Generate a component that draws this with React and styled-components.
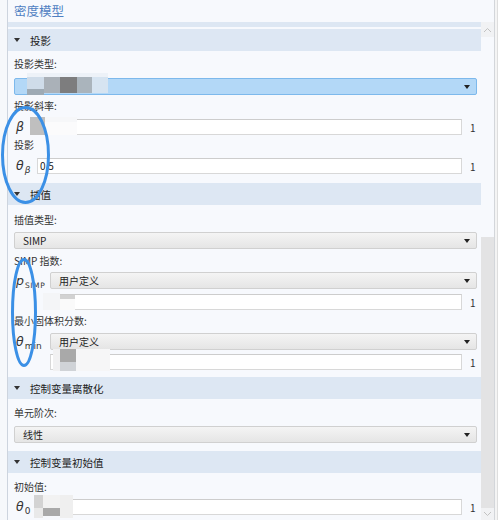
import React from 'react';
import styled, { createGlobalStyle } from 'styled-components';

const GlobalStyle = createGlobalStyle`
  html, body {
    margin: 0;
    padding: 0;
    background: #fff;
  }
  body {
    font-family: "Noto Sans CJK SC", "Noto Sans", sans-serif;
    color: #333;
  }
`;

const Window = styled.div`
  position: relative;
  display: flex;
  width: 502px;
  height: 520px;
  overflow: hidden;
  background: #fff;
`;

const Gutter = styled.div`
  width: 7px;
  flex: none;
  background: #f6f8fb;
`;

const Panel = styled.div`
  width: 486px;
  flex: none;
  display: flex;
  flex-direction: column;
  border-left: 1px solid #cdd4de;
  border-right: 1px solid #d3d6da;
  background: #f7f9fd;
`;

const Rail = styled.div`
  width: 2px;
  flex: none;
  border-right: 1px solid #dedede;
  background: #f4f4f4;
`;

const Title = styled.div`
  height: 22px;
  line-height: 22px;
  padding-left: 6px;
  font-size: 12.5px;
  color: #4f7fc2;
`;

const Body = styled.div`
  flex: 1;
  min-height: 0;
  display: flex;
`;

const Content = styled.div`
  width: 473px;
  flex: none;
  overflow: hidden;
`;

const Strip = styled.div`
  height: 5px;
  margin-bottom: 2px;
  background: #dde7f3;
`;

const Header = styled.div`
  height: 22px;
  display: flex;
  align-items: center;
  gap: 10px;
  padding-left: 6px;
  background: #dde7f3;
  font-size: 10.5px;
  color: #222;
`;

const Caret = styled.span`
  width: 0;
  height: 0;
  border-left: 3px solid transparent;
  border-right: 3px solid transparent;
  border-top: 4px solid ${p => p.$color || '#333'};
`;

const Section = styled.div`
  padding: ${p => p.$top}px 4px ${p => p.$bottom}px 6px;
`;

const Label = styled.div`
  height: 20px;
  line-height: 20px;
  font-size: 10px;
  color: #333;
  margin-bottom: ${p => p.$mb ?? 2}px;
`;

const Select = styled.div`
  height: 17px;
  box-sizing: border-box;
  display: flex;
  align-items: center;
  justify-content: space-between;
  padding: 0 6px 0 ${p => (p.$indent ? 9 : 8)}px;
  border: 1px solid ${p => (p.$active ? '#7db9ec' : '#d0d0d0')};
  border-radius: 2px;
  background: ${p =>
    p.$active ? '#b3d8f7' : 'linear-gradient(#f4f4f4, #e5e5e5)'};
  font-size: 10px;
  color: #222;
  margin-bottom: ${p => p.$mb ?? 0}px;
`;

const InputRow = styled.div`
  display: flex;
  align-items: center;
  margin-top: ${p => p.$mt ?? 0}px;
  margin-bottom: ${p => p.$mb ?? 0}px;
`;

const Input = styled.div`
  flex: 1;
  height: 16px;
  box-sizing: border-box;
  line-height: 14px;
  padding-left: 2px;
  border: 1px solid #d8d8d8;
  border-top-color: #cdcdcd;
  background: #fff;
  font-size: 10px;
  color: #222;
`;

const Unit = styled.span`
  width: 15px;
  flex: none;
  box-sizing: border-box;
  padding-left: 8px;
  font-size: 10px;
  color: #333;
`;

const SymRow = styled.div`
  display: flex;
  align-items: flex-start;
  margin-bottom: ${p => p.$mb ?? 0}px;
`;

const Sym = styled.span`
  display: block;
  width: ${p => p.$w}px;
  height: 16px;
  flex: none;
  box-sizing: border-box;
  padding-left: 2px;
  font-family: "DejaVu Sans", "Noto Sans", sans-serif;
  font-style: italic;
  font-size: 12.5px;
  line-height: ${p => (p.$select ? 17 : 16)}px;
  color: #333;
  white-space: nowrap;
`;

const Sub = styled.sub`
  font-size: ${p => (p.$caps ? 7.5 : 9)}px;
  font-style: ${p => (p.$upright ? 'normal' : 'italic')};
  line-height: 0;
  vertical-align: -3px;
  margin-left: 1px;
  letter-spacing: ${p => (p.$caps ? 0.6 : 0)}px;
`;

const Stack = styled.div`
  flex: 1;
  display: flex;
  flex-direction: column;
`;

const Scrollbar = styled.div`
  width: 13px;
  flex: none;
  display: flex;
  flex-direction: column;
  background: #f7f9fd;
`;

const ScrollButton = styled.div`
  height: ${p => p.$h}px;
  flex: none;
  display: flex;
  align-items: center;
  justify-content: center;
  background: #f1f2f4;
`;

const Track = styled.div`
  flex: 1;
  display: flex;
  flex-direction: column;
`;

const Thumb = styled.div`
  flex: 1;
  margin-top: 200px;
  background: #e3e3e4;
`;

const Chevron = ({ up }) => (
  <svg width="9" height="6" viewBox="0 0 9 6">
    <path
      d={up ? 'M1 5 L4.5 1.5 L8 5' : 'M1 1 L4.5 4.5 L8 1'}
      fill="none"
      stroke="#c2c2c2"
      strokeWidth="1"
    />
  </svg>
);

const Blot = styled.div`
  position: absolute;
  pointer-events: none;
`;

const Marks = styled.svg`
  position: absolute;
  left: 0;
  top: 0;
  pointer-events: none;
`;

const blots = [
  [27, 73, 81, 5, '#edf2f8'],
  [27, 77, 17, 12, '#cfdce9'],
  [44, 77, 16, 16, '#aab1b8'],
  [60, 77, 17, 16, '#7d7d7e'],
  [77, 77, 15, 16, '#aab4bc'],
  [92, 77, 16, 16, '#d6e4f1'],
  [27, 89, 17, 6, '#9eaab4'],
  [30, 117, 15, 18, '#bfbfbf'],
  [45, 117, 32, 5, '#f6f7f9'],
  [45, 122, 32, 13, '#fbfbfc'],
  [43, 293, 17, 17, '#f4f5f7'],
  [60, 295, 15, 4, '#d2d2d2'],
  [60, 299, 15, 11, '#fafafa'],
  [53, 349, 7, 22, '#f1f1f2'],
  [60, 349, 16, 13, '#a9a9a9'],
  [60, 362, 16, 9, '#d0d3d7'],
  [76, 349, 34, 22, '#f6f6f7'],
  [34, 495, 9, 13, '#d3d3d3'],
  [43, 495, 17, 13, '#f2f2f2'],
  [34, 508, 9, 10, '#e9e9e9'],
  [43, 508, 17, 8, '#a9a9a9'],
  [60, 495, 13, 23, '#efefef'],
];

const Dropdown = ({ children, active, mb }) => (
  <Select $active={active} $mb={mb}>
    <span>{children}</span>
    <Caret $color="#222" />
  </Select>
);

const Field = ({ value, mt, mb }) => (
  <InputRow $mt={mt} $mb={mb}>
    <Input>{value}</Input>
    <Unit>1</Unit>
  </InputRow>
);

const App = () => {
  return (
    <Window>
      <GlobalStyle />
      <Gutter />
      <Panel>
        <Title>密度模型</Title>
        <Body>
          <Content>
            <Strip />
            <Header>
              <Caret />
              投影
            </Header>
            <Section $top={3} $bottom={9}>
              <Label $mb={4}>投影类型:</Label>
              <Dropdown active mb={1}>
                {' '}
              </Dropdown>
              <Label $mb={3}>投影斜率:</Label>
              <SymRow>
                <Sym $w={16}>β</Sym>
                <Stack>
                  <Field />
                </Stack>
              </SymRow>
              <Label $mb={3}>投影</Label>
              <SymRow>
                <Sym $w={23}>
                  θ<Sub>β</Sub>
                </Sym>
                <Stack>
                  <Field value="0.5" />
                </Stack>
              </SymRow>
            </Section>

            <Header>
              <Caret />
              插值
            </Header>
            <Section $top={5} $bottom={7}>
              <Label>插值类型:</Label>
              <Dropdown mb={2}>SIMP</Dropdown>
              <Label $mb={1}>SIMP 指数:</Label>
              <SymRow $mb={1}>
                <Sym $w={36} $select>
                  p<Sub $caps $upright>SIMP</Sub>
                </Sym>
                <Stack>
                  <Dropdown>用户定义</Dropdown>
                  <Field mt={5} />
                </Stack>
              </SymRow>
              <Label>最小固体积分数:</Label>
              <SymRow>
                <Sym $w={36} $select>
                  θ<Sub $upright>min</Sub>
                </Sym>
                <Stack>
                  <Dropdown>用户定义</Dropdown>
                  <Field mt={4} />
                </Stack>
              </SymRow>
            </Section>

            <Header>
              <Caret />
              控制变量离散化
            </Header>
            <Section $top={4} $bottom={8}>
              <Label $mb={3}>单元阶次:</Label>
              <Dropdown>线性</Dropdown>
            </Section>

            <Header>
              <Caret />
              控制变量初始值
            </Header>
            <Section $top={4} $bottom={8}>
              <Label>初始值:</Label>
              <SymRow>
                <Sym $w={20}>
                  θ<Sub $upright>0</Sub>
                </Sym>
                <Stack>
                  <Field />
                </Stack>
              </SymRow>
            </Section>
          </Content>
          <Scrollbar>
            <ScrollButton $h={15}>
              <Chevron up />
            </ScrollButton>
            <Track>
              <Thumb />
            </Track>
            <ScrollButton $h={12}>
              <Chevron />
            </ScrollButton>
          </Scrollbar>
        </Body>
      </Panel>
      <Rail />

      {blots.map(([x, y, w, h, c], i) => (
        <Blot
          key={i}
          style={{ left: x, top: y, width: w, height: h, background: c }}
        />
      ))}
      <Marks width="502" height="520">
        <ellipse
          cx="25.5"
          cy="155"
          rx="23"
          ry="47.5"
          fill="none"
          stroke="#3b90e6"
          strokeWidth="3"
        />
        <ellipse
          cx="24"
          cy="312.5"
          rx="11.5"
          ry="53"
          fill="none"
          stroke="#3b90e6"
          strokeWidth="3"
        />
      </Marks>
    </Window>
  );
};

export default App;
